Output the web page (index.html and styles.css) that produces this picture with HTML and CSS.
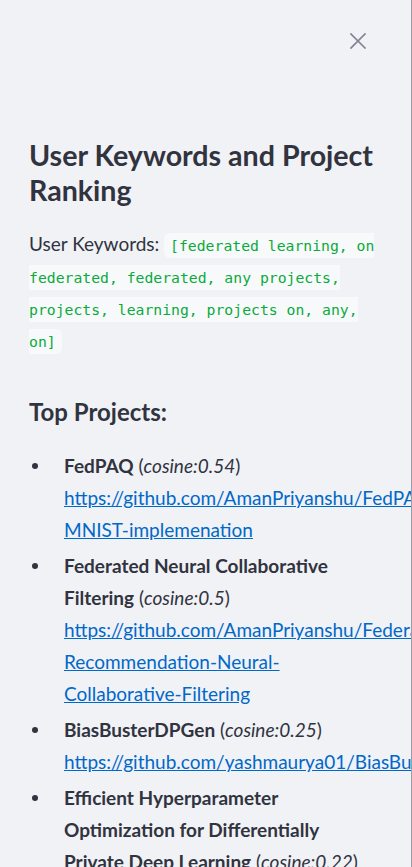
FILE: index.html
```html
<!DOCTYPE html>
<html lang="en">
<head>
<meta charset="utf-8">
<title>User Keywords and Project Ranking</title>
<link rel="stylesheet" href="styles.css">
</head>
<body>
<aside class="sidebar">
  <div class="sidebar-header">
    <button class="close-btn" aria-label="Close sidebar">
      <svg width="16" height="16" viewBox="0 0 16 16" aria-hidden="true"><path d="M1 1 L15 15 M15 1 L1 15" stroke="#808495" stroke-width="1.7" stroke-linecap="square" fill="none"/></svg>
    </button>
  </div>
  <div class="sidebar-content">
    <h1 class="title">User Keywords and Project Ranking</h1>
    <p class="keywords">User Keywords: <code>[federated learning, on federated, federated, any projects, projects, learning, projects on, any, on]</code></p>
    <h3 class="subtitle">Top Projects:</h3>
    <ul class="projects">
      <li><span><strong>FedPAQ</strong> (<em>cosine:0.54</em>) <a href="#">https://github.com/AmanPriyanshu/FedPAQ-MNIST-implemenation</a></span></li>
      <li><span><strong>Federated Neural Collaborative Filtering</strong> (<em>cosine:0.5</em>) <a href="#">https://github.com/AmanPriyanshu/Federated-Recommendation-Neural-Collaborative-Filtering</a></span></li>
      <li><span><strong>BiasBusterDPGen</strong> (<em>cosine:0.25</em>) <a href="#">https://github.com/yashmaurya01/BiasBusterDPGen</a></span></li>
      <li><span><strong>Efficient Hyperparameter Optimization for Differentially Private Deep Learning</strong> (<em>cosine:0.22</em>) <a href="#">https://github.com/AmanPriyanshu/DP-HyperparamTuning</a></span></li>
    </ul>
  </div>
</aside>
</body>
</html>
```

FILE: styles.css
```css
html, body {
  margin: 0;
  padding: 0;
  background: #f0f2f6;
}
body {
  font-family: Lato, "Noto Sans", sans-serif;
  color: #31333f;
  overflow: hidden;
  height: 867px;
}
.sidebar {
  width: 411px;
  height: 867px;
  border-right: 1px solid #9c9ca2;
  overflow: hidden;
  background: #f0f2f6;
}
.sidebar-header {
  display: flex;
  justify-content: flex-end;
  padding: 33px 45px 0 0;
}
.close-btn {
  border: 0;
  background: none;
  padding: 0;
  width: 16px;
  height: 16px;
  display: block;
}
.close-btn svg { display: block; }
.sidebar-content {
  padding: 89px 29px 0 29px;
}
.title {
  font-size: 28.6px;
  line-height: 35px;
  font-weight: 700;
  margin: 0 0 20px;
}
.keywords {
  font-size: 19px;
  line-height: 32px;
  margin: 0;
}
code {
  font-family: "DejaVu Sans Mono", "Liberation Mono", monospace;
  font-size: 14.75px;
  line-height: 1;
  color: #09ab3b;
  background: #f8f9fb;
  padding: 0.25em 0.4em;
  border-radius: 6px;
}
.subtitle {
  font-size: 24px;
  line-height: 29px;
  font-weight: 700;
  margin: 41px 0 24px;
}
.projects {
  list-style: none;
  margin: 0;
  padding: 0;
  font-size: 19px;
  line-height: 32px;
}
.projects li {
  display: flex;
  align-items: flex-start;
  margin-bottom: 4px;
}
.projects li::before {
  content: "";
  flex: none;
  width: 6px;
  height: 6px;
  border-radius: 50%;
  background: #31333f;
  margin: 13px 26px 0 3px;
}
.projects span {
  min-width: 0;
}
strong { font-weight: 700; }
a {
  color: #0068c9;
  text-decoration: underline;
}
```
